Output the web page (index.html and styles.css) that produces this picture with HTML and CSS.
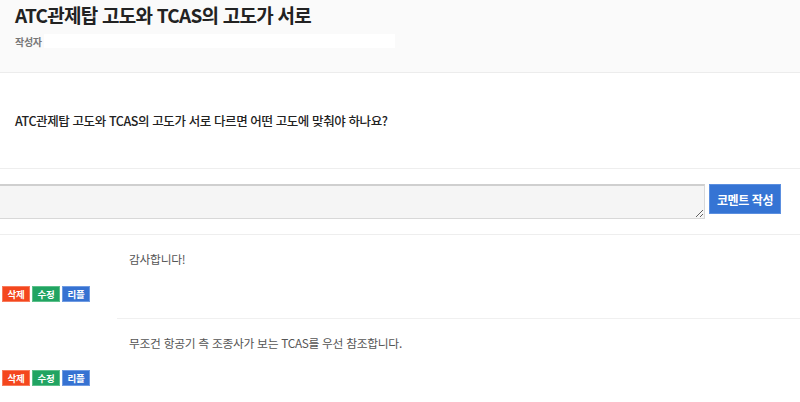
FILE: index.html
```html
<!DOCTYPE html>
<html lang="ko">
<head>
<meta charset="utf-8">
<title>ATC관제탑 고도와 TCAS의 고도가 서로</title>
<link rel="stylesheet" href="styles.css">
</head>
<body>
<div class="page">
  <header class="post-head">
    <h1 class="post-title">ATC관제탑 고도와 TCAS의 고도가 서로</h1>
    <div class="post-meta"><span class="meta-label">작성자</span><span class="meta-value"></span></div>
  </header>
  <section class="post-body">
    <p>ATC관제탑 고도와 TCAS의 고도가 서로 다르면 어떤 고도에 맞춰야 하나요?</p>
  </section>
  <form class="comment-form">
    <textarea class="comment-input"></textarea>
    <button type="button" class="btn-submit">코멘트 작성</button>
  </form>
  <ul class="comments">
    <li class="comment">
      <div class="comment-side">
        <div class="actions">
          <span class="act act-del">삭제</span>
          <span class="act act-edit">수정</span>
          <span class="act act-reply">리플</span>
        </div>
      </div>
      <div class="comment-text">감사합니다!</div>
    </li>
    <li class="comment">
      <div class="comment-side">
        <div class="actions">
          <span class="act act-del">삭제</span>
          <span class="act act-edit">수정</span>
          <span class="act act-reply">리플</span>
        </div>
      </div>
      <div class="comment-text">무조건 항공기 측 조종사가 보는 TCAS를 우선 참조합니다.</div>
    </li>
  </ul>
</div>
</body>
</html>
```
FILE: styles.css
```css
* { box-sizing: border-box; }
html, body { margin: 0; padding: 0; background: #fff; }
body {
  font-family: "Noto Sans CJK KR", "Noto Sans", sans-serif;
  color: #222;
  overflow: hidden;
}
.page { width: 800px; }
.post-head {
  background: #fafafa;
  border-bottom: 1px solid #ececec;
  height: 73px;
  padding: 1px 15px 0;
}
.post-title {
  margin: 0;
  font-size: 19px;
  font-weight: 700;
  line-height: 28px;
  letter-spacing: -0.75px;
  color: #222;
}
.post-meta {
  display: flex;
  align-items: center;
  margin-top: 5px;
  height: 14px;
}
.meta-label {
  font-size: 10px;
  font-weight: 700;
  color: #777;
  letter-spacing: -0.3px;
}
.meta-value {
  display: block;
  width: 351px;
  height: 14px;
  background: #fff;
  margin-left: 2px;
}
.post-body {
  height: 96px;
  border-bottom: 1px solid #eeeeee;
  display: flex;
  align-items: center;
  padding: 0 15px;
}
.post-body p {
  margin: 0;
  font-size: 12.5px;
  font-weight: 500;
  letter-spacing: -0.4px;
  color: #222;
}
.comment-form {
  display: flex;
  align-items: flex-start;
  gap: 4px;
  padding: 15px 0 15px;
  border-bottom: 1px solid #eeeeee;
}
.comment-input {
  display: block;
  width: 707px;
  height: 35px;
  margin: 0 0 0 -2px;
  background: #f5f5f5;
  border: 1px solid #d8d8d8;
  border-top: 2px solid #cfcfcf;
  resize: vertical;
  font: inherit;
}
.btn-submit {
  width: 72px;
  height: 30px;
  background: #3574d4;
  border: 1px solid #5b8fe0;
  color: #fff;
  font-family: inherit;
  font-size: 12px;
  font-weight: 700;
  letter-spacing: -0.4px;
  padding: 0;
  margin-top: 0;
}
.comments { list-style: none; margin: 0; padding: 0; }
.comment {
  display: flex;
  height: 84px;
}
.comment-side {
  width: 117px;
  flex: none;
  display: flex;
  align-items: flex-end;
  padding: 0 0 17px 2px;
}
.actions { display: flex; gap: 2px; }
.act {
  display: flex;
  align-items: center;
  justify-content: center;
  width: 28px;
  height: 16px;
  font-size: 9.5px;
  font-weight: 700;
  color: #fff;
  letter-spacing: -0.3px;
}
.act-del { background: #f4471e; border: 1px solid #f87b5c; }
.act-edit { background: #21a462; border: 1px solid #5cc08a; }
.act-reply { background: #3672d2; border: 1px solid #6f9be2; }
.comment-text {
  flex: 1;
  padding: 15px 12px 0;
  font-size: 11.8px;
  color: #555;
  letter-spacing: -0.3px;
  border-bottom: 1px solid #f0f0f0;
}
.comment:last-child .comment-text { border-bottom: 0; }
```
